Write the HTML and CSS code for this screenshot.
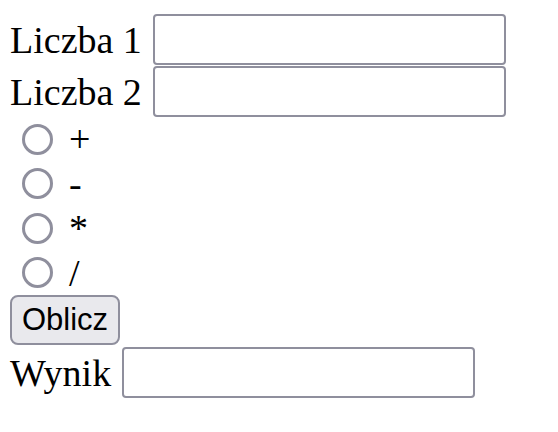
FILE: index.html
```html
<!DOCTYPE html>
<html lang="pl">
<head>
<meta charset="utf-8">
<title>Kalkulator</title>
<link rel="stylesheet" href="styles.css">
</head>
<body>
<form class="calc">
  <div class="field">
    <label class="label" for="a">Liczba 1</label>
    <input class="text-input" id="a" type="text">
  </div>
  <div class="field">
    <label class="label" for="b">Liczba 2</label>
    <input class="text-input" id="b" type="text">
  </div>
  <div class="op"><input class="radio" type="radio" name="op" id="o1"><label class="op-label" for="o1">+</label></div>
  <div class="op"><input class="radio" type="radio" name="op" id="o2"><label class="op-label" for="o2">-</label></div>
  <div class="op"><input class="radio" type="radio" name="op" id="o3"><label class="op-label" for="o3">*</label></div>
  <div class="op"><input class="radio" type="radio" name="op" id="o4"><label class="op-label" for="o4">/</label></div>
  <div class="actions"><button class="btn" type="button">Oblicz</button></div>
  <div class="field result">
    <label class="label" for="w">Wynik</label>
    <input class="text-input" id="w" type="text">
  </div>
</form>
</body>
</html>
```
FILE: styles.css
```css
html, body {
  margin: 0;
  padding: 0;
  background: #ffffff;
}

body {
  font-family: "Liberation Serif", "Times New Roman", serif;
  font-size: 38px;
  color: #000000;
}

.calc {
  display: flex;
  flex-direction: column;
  align-items: flex-start;
  padding: 14px 0 0 10px;
}

.field {
  display: flex;
  align-items: center;
  gap: 11px;
  height: 51px;
}

.field + .field {
  margin-top: 1px;
}

.label {
  line-height: 44px;
}

.text-input {
  box-sizing: border-box;
  width: 353px;
  height: 51px;
  margin: 0;
  border: 2px solid #8f8f9d;
  border-radius: 4px;
  background: #ffffff;
  padding: 2px 6px;
  font-family: "Liberation Sans", Arial, sans-serif;
  font-size: 32px;
}

.op {
  display: flex;
  align-items: center;
  height: 44.5px;
}

.radio {
  appearance: none;
  -webkit-appearance: none;
  box-sizing: border-box;
  width: 31px;
  height: 31px;
  margin: 0 16px 0 12px;
  border: 3.5px solid #8f8f9d;
  border-radius: 50%;
  background: #ffffff;
}

.op-label {
  line-height: 44px;
}

.actions {
  display: flex;
}

.btn {
  box-sizing: border-box;
  width: 110px;
  height: 50px;
  margin: 0;
  padding: 0;
  border: 2px solid #8f8f9d;
  border-radius: 8px;
  background: #e9e9ed;
  color: #000000;
  font-family: "Liberation Sans", Arial, sans-serif;
  font-size: 31px;
}

.result {
  margin-top: 2px;
}
```
